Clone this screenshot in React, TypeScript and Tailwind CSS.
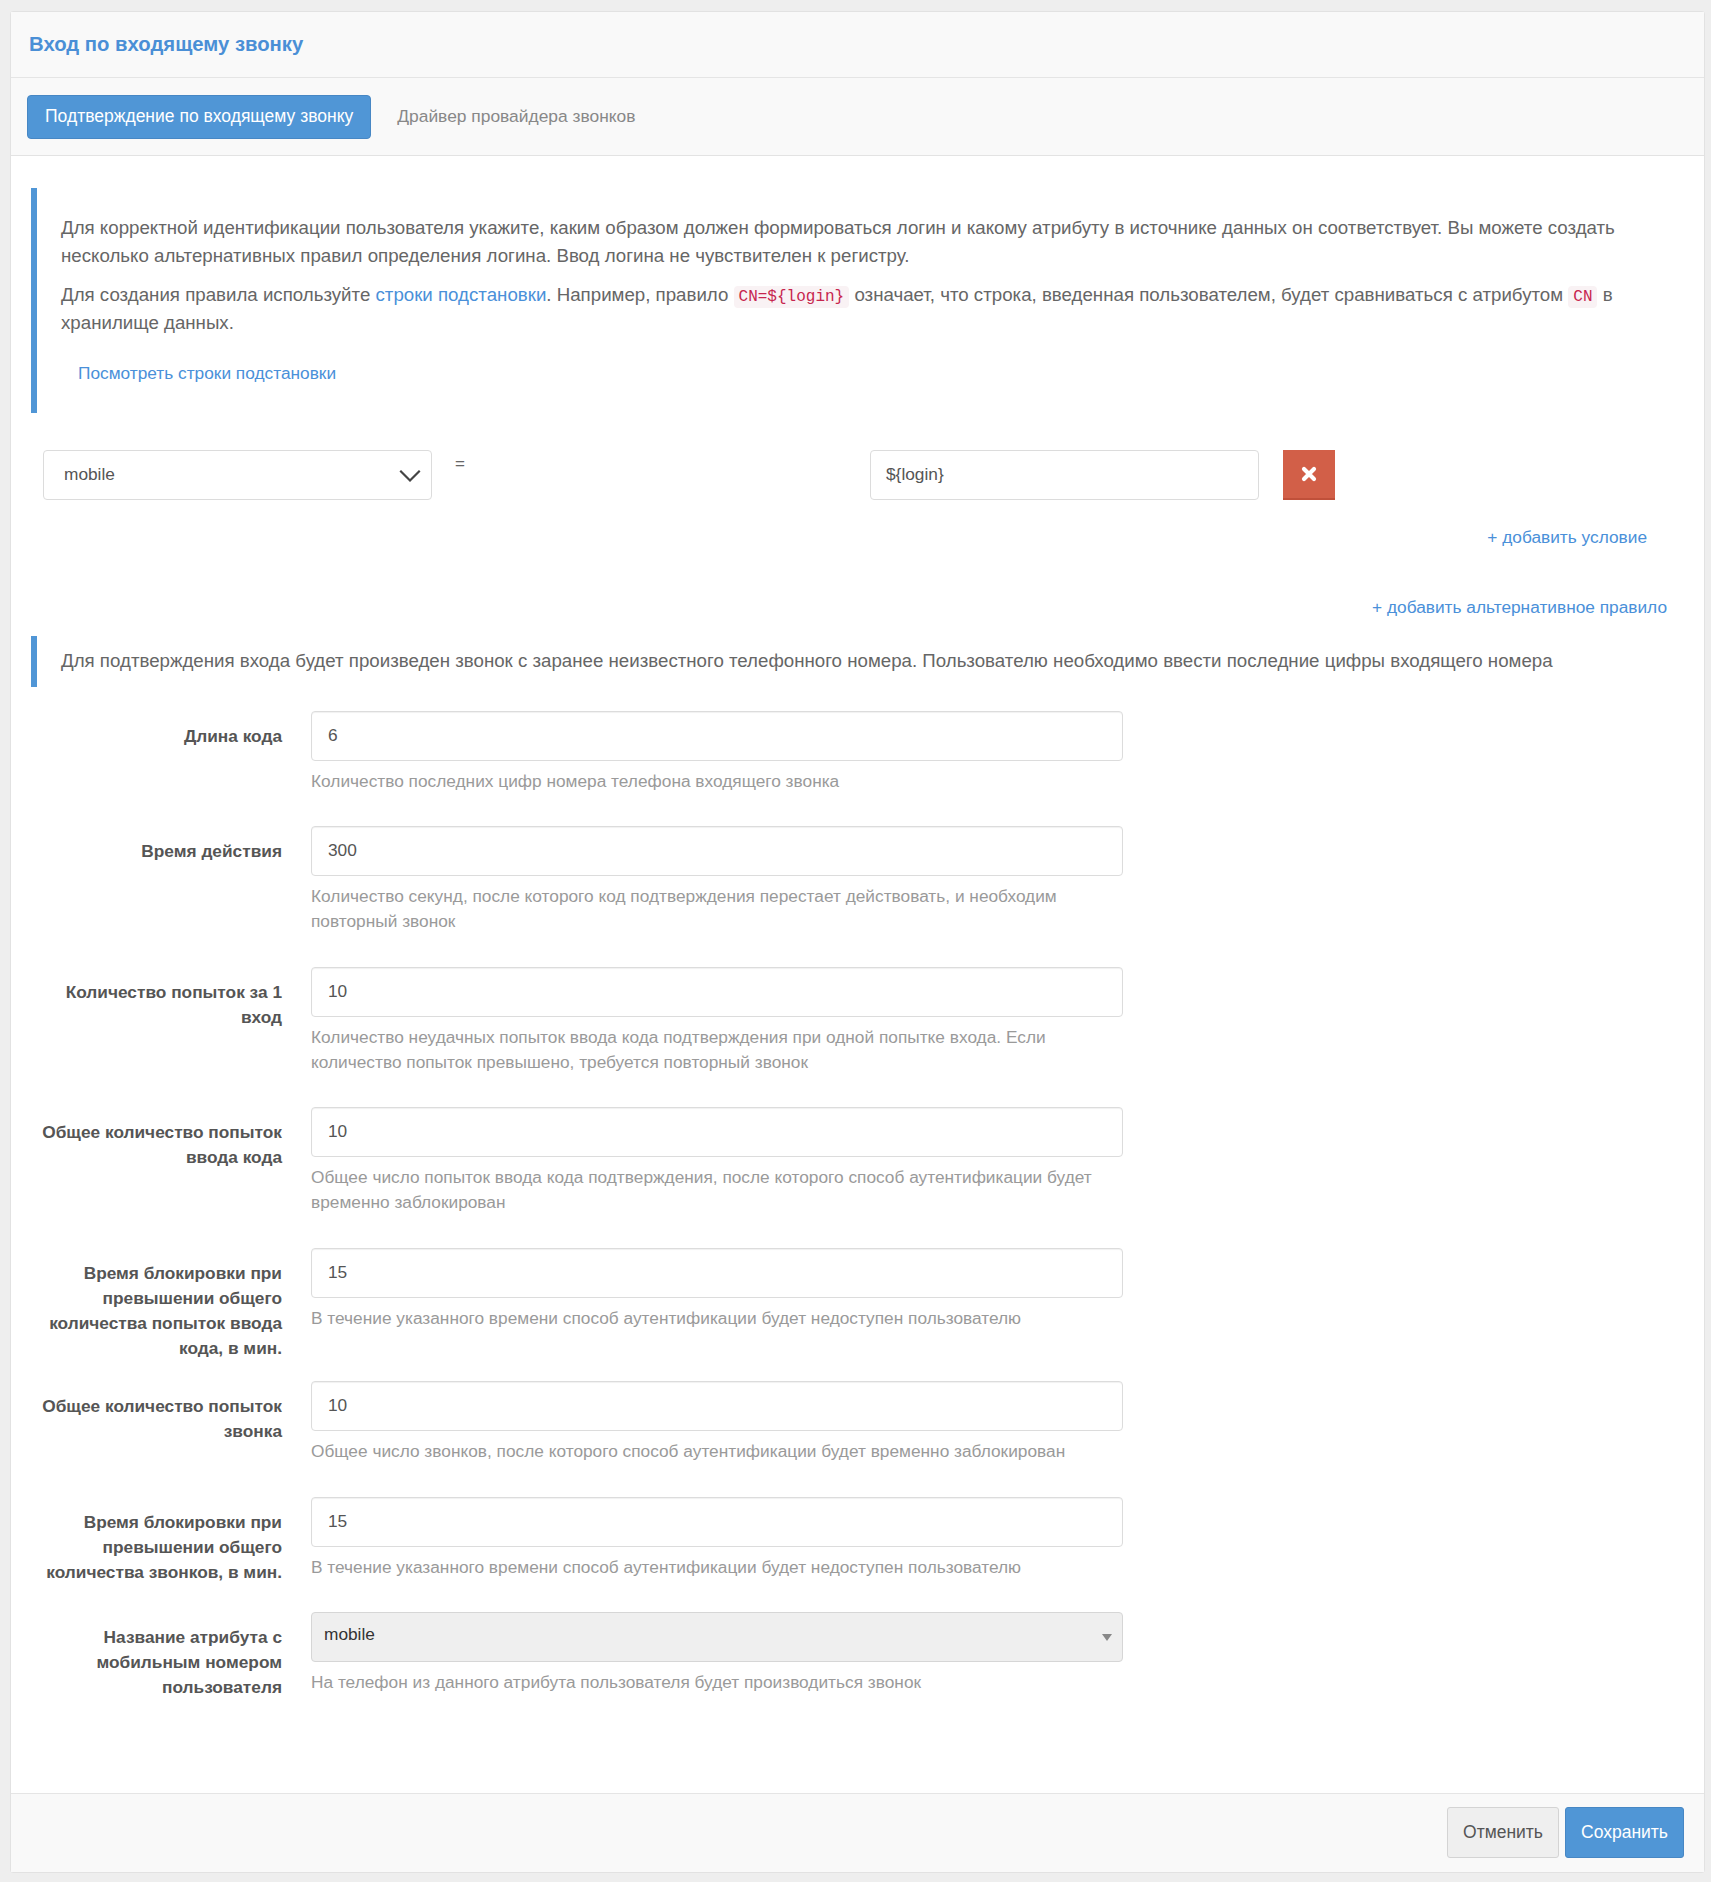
const font = { fontFamily: '"Liberation Sans", Arial, sans-serif' };

interface FieldProps {
  label: string[];
  value: string;
  help: string[];
  select?: boolean;
}

function Field({ label, value, help, select }: FieldProps) {
  return (
    <div className="flex mb-[20.5px]">
      <div className="w-[251px] shrink-0 pt-[13px] text-right text-[17.3px] leading-[25px] font-bold text-[#555] whitespace-nowrap">
        {label.map((l, i) => (
          <div key={i}>{l}</div>
        ))}
      </div>
      <div className="ml-[29px] w-[812px]">
        {select ? (
          <div className="h-[50px] rounded-[4px] border border-[#d6d6d6] bg-[#efefef] flex items-center justify-between pl-[12px] pr-[10px] text-[17.3px] text-[#333]">
            <span className="-mt-[4px]">{value}</span>
            <svg width="10" height="8" viewBox="0 0 10 8">
              <path d="M0 1 L10 1 L5 8 Z" fill="#888" />
            </svg>
          </div>
        ) : (
          <div className="h-[50px] rounded-[4px] border border-[#dcdcdc] bg-white flex items-center px-[16px] text-[17.3px] text-[#555] shadow-[inset_0_1px_1px_rgba(0,0,0,0.06)]">
            {value}
          </div>
        )}
        <div className="mt-[8px] mb-[12px] text-[17.3px] leading-[25px] text-[#9a9a9a]">
          {help.map((h, i) => (
            <div key={i}>{h}</div>
          ))}
        </div>
      </div>
    </div>
  );
}

const fields: FieldProps[] = [
  {
    label: ["Длина кода"],
    value: "6",
    help: ["Количество последних цифр номера телефона входящего звонка"],
  },
  {
    label: ["Время действия"],
    value: "300",
    help: [
      "Количество секунд, после которого код подтверждения перестает действовать, и необходим",
      "повторный звонок",
    ],
  },
  {
    label: ["Количество попыток за 1", "вход"],
    value: "10",
    help: [
      "Количество неудачных попыток ввода кода подтверждения при одной попытке входа. Если",
      "количество попыток превышено, требуется повторный звонок",
    ],
  },
  {
    label: ["Общее количество попыток", "ввода кода"],
    value: "10",
    help: [
      "Общее число попыток ввода кода подтверждения, после которого способ аутентификации будет",
      "временно заблокирован",
    ],
  },
  {
    label: ["Время блокировки при", "превышении общего", "количества попыток ввода", "кода, в мин."],
    value: "15",
    help: ["В течение указанного времени способ аутентификации будет недоступен пользователю"],
  },
  {
    label: ["Общее количество попыток", "звонка"],
    value: "10",
    help: ["Общее число звонков, после которого способ аутентификации будет временно заблокирован"],
  },
  {
    label: ["Время блокировки при", "превышении общего", "количества звонков, в мин."],
    value: "15",
    help: ["В течение указанного времени способ аутентификации будет недоступен пользователю"],
  },
  {
    label: ["Название атрибута с", "мобильным номером", "пользователя"],
    value: "mobile",
    help: ["На телефон из данного атрибута пользователя будет производиться звонок"],
    select: true,
  },
];

function Code({ children }: { children: string }) {
  return (
    <code
      className="px-[5px] py-[2px] rounded-[4px] bg-[#f9f2f4] text-[#c7254e] text-[16px] leading-[20px]"
      style={{ fontFamily: '"Liberation Mono", "DejaVu Sans Mono", monospace' }}
    >
      {children}
    </code>
  );
}

export default function App() {
  return (
    <div className="min-h-[1882px] bg-[#eeeeee] pt-[11px] pl-[10px] pr-[6px] pb-[9px]" style={font}>
      <div className="bg-white border border-[#e2e2e2] rounded-[3px]">
        {/* header */}
        <div className="h-[66px] bg-[#f9f9f9] border-b border-[#e5e5e5] flex items-center px-[18px]">
          <h1 className="text-[20.3px] font-bold text-[#4a8fd6]">Вход по входящему звонку</h1>
        </div>

        {/* tabs */}
        <div className="h-[78px] bg-[#f9f9f9] border-b border-[#e3e3e3] flex items-center px-[16px]">
          <button className="h-[44px] px-[17px] rounded-[4px] bg-[#5096d6] border border-[#4787c4] text-white text-[17.5px]">
            Подтверждение по входящему звонку
          </button>
          <span className="ml-[26px] text-[17.4px] text-[#888]">Драйвер провайдера звонков</span>
        </div>

        {/* body */}
        <div className="px-[20px] pt-[32px] pb-[65px]">
          <div className="border-l-[6px] border-[#5096d6] pl-[24px] pr-[10px] pt-[26px] pb-[25px] text-[18.7px] leading-[27.5px] text-[#666]">
            <p>
              Для корректной идентификации пользователя укажите, каким образом должен формироваться логин и какому
              атрибуту в источнике данных он соответствует. Вы можете создать несколько альтернативных правил
              определения логина. Ввод логина не чувствителен к регистру.
            </p>
            <p className="mt-[12px]">
              Для создания правила используйте <span className="text-[#4a90d9]">строки подстановки</span>. Например,
              правило <Code>{"CN=${login}"}</Code> означает, что строка, введенная пользователем, будет сравниваться с
              атрибутом <Code>CN</Code> в хранилище данных.
            </p>
            <div className="mt-[24px] pl-[17px] text-[17.3px] text-[#4a90d9]">Посмотреть строки подстановки</div>
          </div>

          {/* rule row */}
          <div className="mt-[37px] pl-[12px] flex items-start">
            <div className="w-[389px] h-[50px] rounded-[4px] border border-[#dcdcdc] flex items-center justify-between pl-[20px] pr-[8px] text-[17.3px] text-[#555]">
              <span>mobile</span>
              <svg width="26" height="26" viewBox="0 0 24 24" fill="none" stroke="#444" strokeWidth="2">
                <path d="M3 8 L12 17 L21 8" />
              </svg>
            </div>
            <div className="w-[438px] pl-[23px] pt-[4px] text-[17px] text-[#666] leading-[20px]">=</div>
            <div className="w-[389px] h-[50px] rounded-[4px] border border-[#dcdcdc] flex items-center px-[15px] text-[17.3px] text-[#555]">
              {"${login}"}
            </div>
            <button className="ml-[24px] w-[52px] h-[50px] bg-[#d25f48] border-b-2 border-[#c0503a] flex items-center justify-center">
              <svg width="16" height="16" viewBox="0 0 16 16">
                <path d="M3 3 L13 13 M13 3 L3 13" stroke="white" strokeWidth="4.2" strokeLinecap="round" />
              </svg>
            </button>
          </div>

          <div className="mt-[25px] flex justify-end pr-[37px] text-[17.3px] text-[#4a90d9] leading-[25px]">
            + добавить условие
          </div>
          <div className="mt-[45px] flex justify-end pr-[17px] text-[17.3px] text-[#4a90d9] leading-[25px]">
            + добавить альтернативное правило
          </div>

          <div className="mt-[16px] h-[51px] border-l-[6px] border-[#5096d6] pl-[24px] flex items-center text-[18.7px] text-[#666]">
            Для подтверждения входа будет произведен звонок с заранее неизвестного телефонного номера. Пользователю
            необходимо ввести последние цифры входящего номера
          </div>

          <div className="mt-[24px]">
            {fields.map((f, i) => (
              <Field key={i} {...f} />
            ))}
          </div>
        </div>

        {/* footer */}
        <div className="h-[79px] bg-[#f9f9f9] border-t border-[#e5e5e5] flex items-start justify-end pt-[13px] pr-[20px] gap-[6px]">
          <button className="h-[51px] w-[112px] rounded-[3px] border border-[#d4d4d4] bg-[#efefef] text-[17.5px] text-[#555]">
            Отменить
          </button>
          <button className="h-[51px] w-[119px] rounded-[3px] border border-[#4787c4] bg-[#5096d6] text-[17.5px] text-white">
            Сохранить
          </button>
        </div>
      </div>
    </div>
  );
}
